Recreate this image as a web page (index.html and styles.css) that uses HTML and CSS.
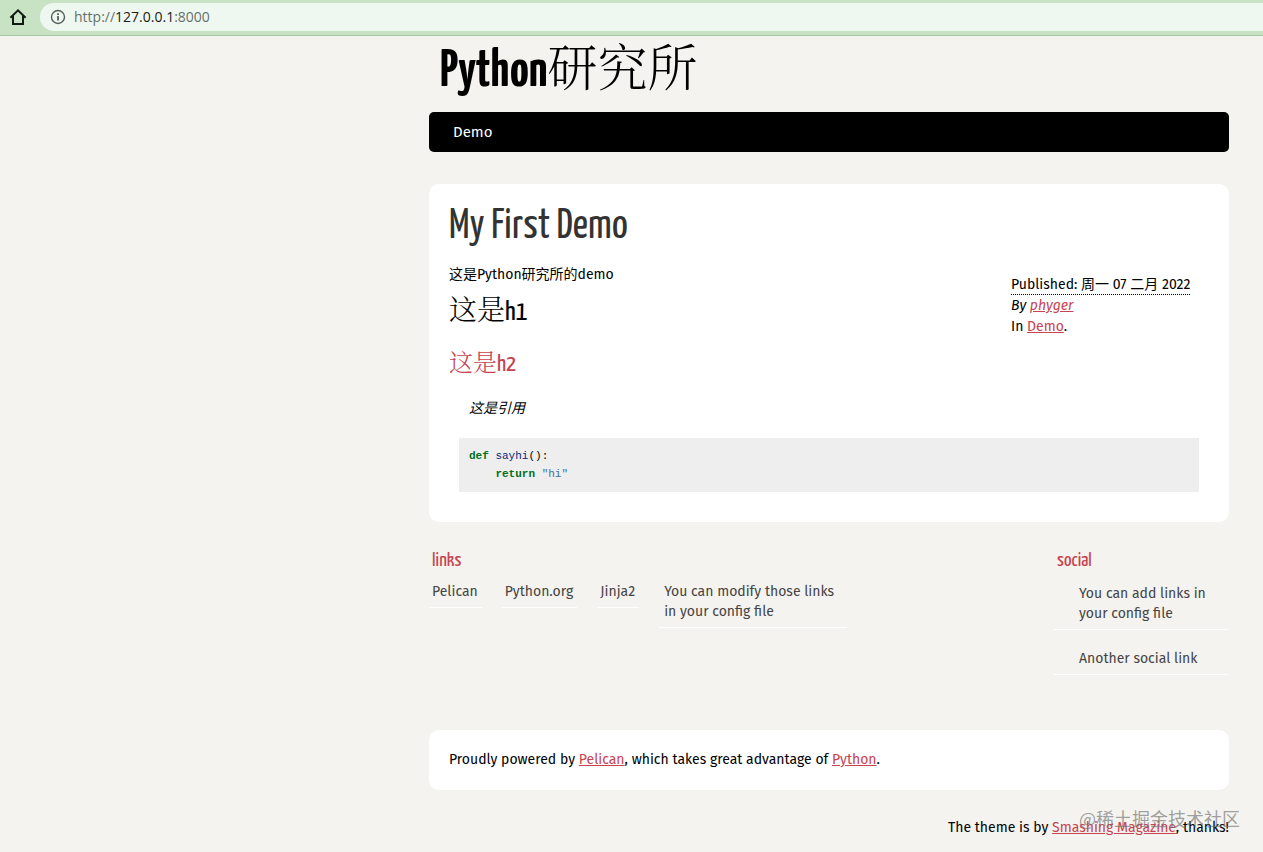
FILE: index.html
```html
<!DOCTYPE html>
<html lang="zh-CN">
<head>
<meta charset="utf-8">
<title>Python研究所</title>
<link rel="stylesheet" href="styles.css">
</head>
<body>
<div class="toolbar">
  <button class="home" type="button" aria-label="Home">
    <svg width="18" height="18" viewBox="0 0 18 18" fill="none" stroke="#111a12" stroke-width="2"><path d="M1.4 9.7 9 2.4l7.6 7.3M4 8v8h10V8"/></svg>
  </button>
  <div class="address">
    <svg width="16" height="16" viewBox="0 0 16 16" fill="none" stroke="#55605a" stroke-width="1.4"><circle cx="8" cy="8" r="6.5"/><path d="M8 7v4.5M8 4.2v1.7" stroke-width="1.8"/></svg>
    <span class="url">http://<b>127.0.0.1</b>:8000</span>
  </div>
</div>
<div class="page">
  <header>
    <h1 class="site-title"><a href="#">Python<span class="han">研究所</span></a></h1>
    <nav class="menu"><a href="#">Demo</a></nav>
  </header>
  <main class="card article">
    <h2 class="entry-title"><a href="#">My First Demo</a></h2>
    <div class="entry-top">
      <div class="entry-text">
        <p>这是Python研究所的demo</p>
        <h1 class="h-one"><span class="han">这是</span>h1</h1>
        <h2 class="h-two"><span class="han">这是</span>h2</h2>
      </div>
      <footer class="post-info">
        <abbr title="2022-02-07">Published: 周一 07 二月 2022</abbr>
        <address>By <a href="#">phyger</a></address>
        <p>In <a href="#">Demo</a>.</p>
      </footer>
    </div>
    <blockquote>这是引用</blockquote>
    <pre class="code"><span class="kw">def</span> <span class="fn">sayhi</span>():
    <span class="kw">return</span> <span class="str">"hi"</span></pre>
  </main>
  <section class="extras">
    <div class="blogroll">
      <h2>links</h2>
      <ul>
        <li><a href="#">Pelican</a></li>
        <li><a href="#">Python.org</a></li>
        <li><a href="#">Jinja2</a></li>
        <li class="wide"><a href="#">You can modify those links in your config file</a></li>
      </ul>
    </div>
    <div class="social">
      <h2>social</h2>
      <ul>
        <li><a href="#">You can add links in your config file</a></li>
        <li><a href="#">Another social link</a></li>
      </ul>
    </div>
  </section>
  <footer>
    <p class="card about">Proudly powered by <a href="#">Pelican</a>, which takes great advantage of <a href="#">Python</a>.</p>
    <p class="credit">The theme is by <a href="#">Smashing Magazine</a>, thanks!</p>
  </footer>
</div>
<div class="watermark">@稀土掘金技术社区</div>
</body>
</html>
```
FILE: styles.css
```css
:root {
  --display: "Yanone Kaffeesatz", "Open Sans Condensed", "Roboto Condensed", sans-serif;
}
* { box-sizing: border-box; }
body {
  margin: 0;
  background: #f4f3ef;
  color: #000;
  font: 14px/20px "Trebuchet MS", "Fira Sans", "Open Sans", "Noto Sans CJK SC", sans-serif;
}
h1, h2, p, ul, pre, blockquote { margin: 0; padding: 0; }
ul { list-style: none; }
a { color: #c74350; }
.toolbar {
  display: flex;
  align-items: center;
  height: 36px;
  padding-bottom: 2px;
  background: #c7e3c4;
  border-bottom: 1px solid #a3c7a2;
}
.home {
  display: flex;
  width: 40px;
  padding: 0 0 0 9px;
  border: 0;
  background: none;
}
.address {
  display: flex;
  flex: 1;
  align-items: center;
  gap: 8px;
  height: 28px;
  padding-left: 10px;
  background: #eff8f0;
  border-radius: 14px 0 0 14px;
}
.url { color: #66706a; font-family: "Open Sans", sans-serif; }
.url b { color: #1c211d; font-weight: 400; }
.page {
  max-width: 834px;
  margin-left: auto;
  padding-right: 34px;
}
.site-title {
  padding: 6px 0 10px 11px;
  font: 700 52px/60px var(--display);
}
.site-title a { color: #000; text-decoration: none; }
.han { font-family: "Noto Serif CJK SC", "Noto Sans CJK SC", serif; font-weight: 300; line-height: 1; }
.site-title .han { font-size: 50px; line-height: 40px; }
.menu {
  padding: 10px 24px;
  background: #000;
  border-radius: 5px;
  font-size: 15px;
}
.menu a { color: #fff; text-decoration: none; }
.card { background: #fff; border-radius: 10px; }
.article { margin-top: 32px; padding: 19px 20px 30px; }
.entry-title { font: 400 42px/48px var(--display); }
.entry-title a { color: #333; text-decoration: none; }
.entry-top { display: flex; justify-content: space-between; padding-top: 14px; }
.h-one { font: 400 28px/56px var(--display); }
.h-two { color: #c74350; font: 400 24px/48px var(--display); }
.post-info { width: 198px; padding: 11px 0 0; line-height: 21px; }
.post-info abbr { display: block; width: max-content; text-decoration: none; border-bottom: 1px dotted #000; line-height: 18px; }
blockquote { padding: 10px 20px 19px; font-style: italic; }
.code {
  margin: 0 10px;
  padding: 9px 10px;
  background: #eee;
  font: 11px/18px "Liberation Mono", monospace;
}
.kw { color: #007020; font-weight: 700; }
.fn { color: #06287e; }
.str { color: #4070a0; }
.extras { display: flex; justify-content: space-between; min-height: 208px; padding: 27px 1px 0 0; }
.extras h2 { padding-left: 3px; color: #c74350; font: 400 20px/24px var(--display); }
.extras li { border-bottom: 1px solid #fff; }
.extras li a { color: #444; text-decoration: none; }
.blogroll ul { display: flex; align-items: flex-start; gap: 20px; padding-top: 9px; }
.blogroll li { padding: 0 4px 5px 3px; }
.blogroll li.wide { width: 188px; padding-left: 5px; }
.social { width: 174px; }
.social ul { padding-top: 11px; }
.social li { margin-bottom: 19px; padding: 0 20px 5px 25px; }
.about { padding: 20px; }
.credit { padding: 28px 0 14px; text-align: right; }
.watermark {
  position: absolute;
  right: 23px;
  top: 806px;
  color: rgba(110, 110, 110, .65);
  font: 18px/24px "Noto Sans CJK SC", sans-serif;
}
```
